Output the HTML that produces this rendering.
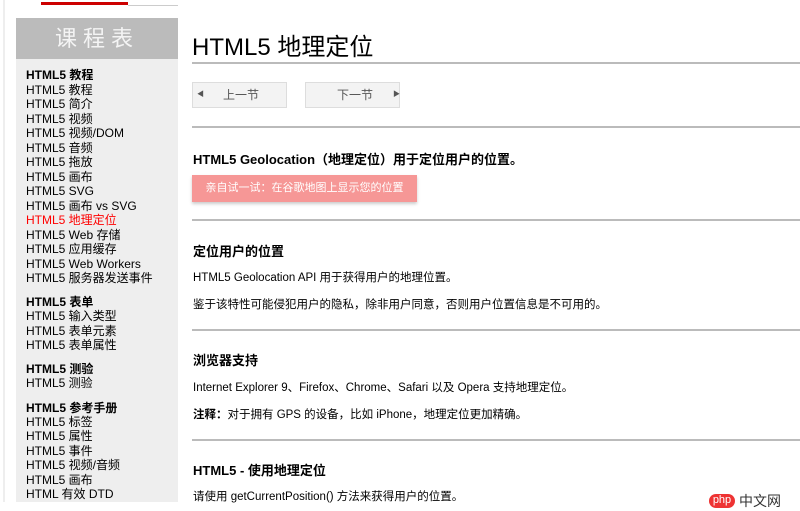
<!DOCTYPE html>
<html><head><meta charset="utf-8"><style>
*{margin:0;padding:0;box-sizing:border-box}
body{width:800px;height:502px;overflow:hidden;background:#fff;position:relative;font-family:"Liberation Sans","Noto Sans CJK SC",sans-serif;color:#000}
.a{position:absolute;white-space:nowrap}
.s{font-size:12px;line-height:14px;left:26px}
.b{font-weight:bold}
.hr{position:absolute;left:192px;width:608px;height:2px;background:#bbb}
.t{font-size:11.5px;left:193px}
.h{font-size:13px;font-weight:bold;left:193px}
.btn{position:absolute;top:82px;height:26px;width:95px;background:#f3f3f3;border:1px solid #ddd;font-size:12px;color:#555;line-height:24px}
</style></head><body>
<div class="a" style="left:3px;top:0;width:2px;height:502px;background:#eee"></div>
<div class="a" style="left:41px;top:2px;width:87px;height:3px;background:#c00"></div>
<div class="a" style="left:128px;top:5px;width:50px;height:1px;background:#ccc"></div>
<div class="a" style="left:16px;top:18px;width:162px;height:484px;background:#eee"></div>
<div class="a" style="left:16px;top:18px;width:162px;height:41px;background:#bbb;color:#f4f4f4;font-size:22px;line-height:41px;text-align:center;letter-spacing:6px">课程表</div>
<div class="a s b" style="top:68px">HTML5 教程</div>
<div class="a s" style="top:83px">HTML5 教程</div>
<div class="a s" style="top:97px">HTML5 简介</div>
<div class="a s" style="top:112px">HTML5 视频</div>
<div class="a s" style="top:126px">HTML5 视频/DOM</div>
<div class="a s" style="top:141px">HTML5 音频</div>
<div class="a s" style="top:155px">HTML5 拖放</div>
<div class="a s" style="top:170px">HTML5 画布</div>
<div class="a s" style="top:184px">HTML5 SVG</div>
<div class="a s" style="top:199px">HTML5 画布 vs SVG</div>
<div class="a s" style="top:213px;color:#f00">HTML5 地理定位</div>
<div class="a s" style="top:228px">HTML5 Web 存储</div>
<div class="a s" style="top:242px">HTML5 应用缓存</div>
<div class="a s" style="top:257px">HTML5 Web Workers</div>
<div class="a s" style="top:271px">HTML5 服务器发送事件</div>
<div class="a s b" style="top:295px">HTML5 表单</div>
<div class="a s" style="top:309px">HTML5 输入类型</div>
<div class="a s" style="top:324px">HTML5 表单元素</div>
<div class="a s" style="top:338px">HTML5 表单属性</div>
<div class="a s b" style="top:362px">HTML5 测验</div>
<div class="a s" style="top:376px">HTML5 测验</div>
<div class="a s b" style="top:401px">HTML5 参考手册</div>
<div class="a s" style="top:415px">HTML5 标签</div>
<div class="a s" style="top:429px">HTML5 属性</div>
<div class="a s" style="top:444px">HTML5 事件</div>
<div class="a s" style="top:458px">HTML5 视频/音频</div>
<div class="a s" style="top:473px">HTML5 画布</div>
<div class="a s" style="top:487px">HTML 有效 DTD</div>

<div class="a" style="left:192px;top:32px;font-size:24px;line-height:32px">HTML5 地理定位</div>
<div class="hr" style="top:62px"></div>
<div class="btn" style="left:192px"><span style="position:absolute;left:4px;font-size:7px">◀</span><span style="position:absolute;left:30px">上一节</span></div>
<div class="btn" style="left:305px"><span style="position:absolute;left:31px">下一节</span><span style="position:absolute;left:87px;font-size:7px">▶</span></div>
<div class="hr" style="top:126px"></div>
<div class="a h" style="top:149px">HTML5 Geolocation（地理定位）用于定位用户的位置。</div>
<div class="a" style="left:192px;top:175px;width:225px;height:27px;background:#f69796;box-shadow:0 2px 3px #ccc;color:#fff;font-size:11px;line-height:27px;text-align:center">亲自试一试：在谷歌地图上显示您的位置</div>
<div class="hr" style="top:219px"></div>
<div class="a h" style="top:241px">定位用户的位置</div>
<div class="a t" style="top:269px">HTML5 Geolocation API 用于获得用户的地理位置。</div>
<div class="a t" style="top:296px">鉴于该特性可能侵犯用户的隐私，除非用户同意，否则用户位置信息是不可用的。</div>
<div class="hr" style="top:329px"></div>
<div class="a h" style="top:350px">浏览器支持</div>
<div class="a t" style="top:379px">Internet Explorer 9、Firefox、Chrome、Safari 以及 Opera 支持地理定位。</div>
<div class="a t" style="top:406px"><b>注释：</b>对于拥有 GPS 的设备，比如 iPhone，地理定位更加精确。</div>
<div class="hr" style="top:439px"></div>
<div class="a h" style="top:460px">HTML5 - 使用地理定位</div>
<div class="a t" style="top:488px">请使用 getCurrentPosition() 方法来获得用户的位置。</div>
<div class="a" style="left:709px;top:494px;width:26px;height:14px;border-radius:7px;background:#e33;color:#fff;font-size:11px;line-height:12px;text-align:center">php</div>
<div class="a" style="left:739px;top:491px;font-size:14px;color:#333">中文网</div>
</body></html>
